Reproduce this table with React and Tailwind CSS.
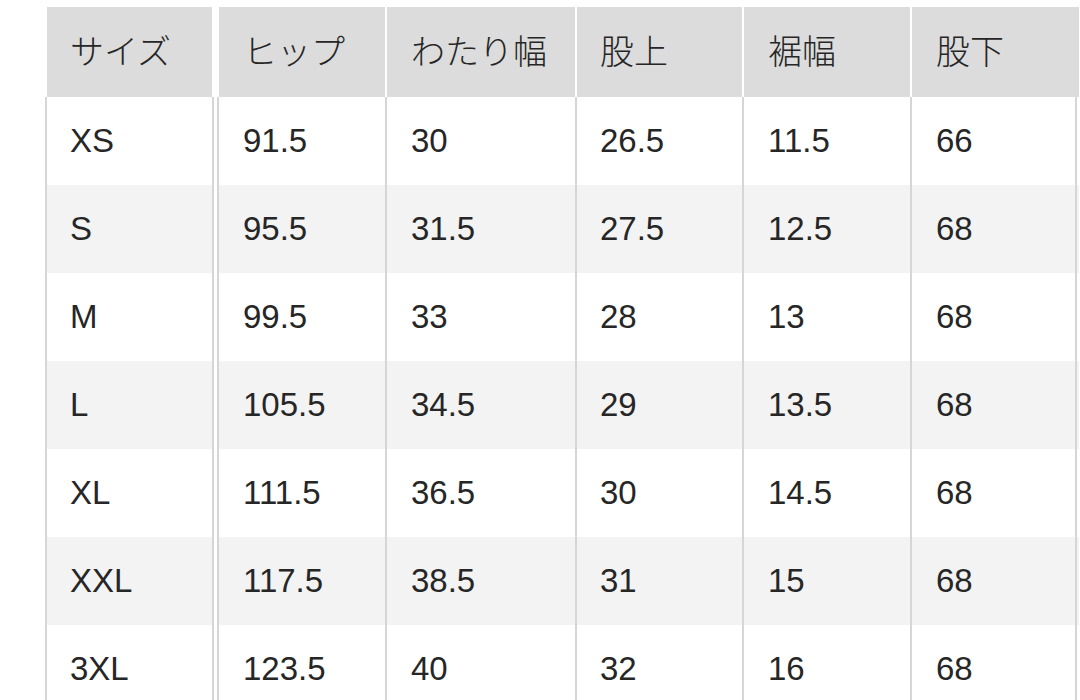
const columns = [
  { label: "サイズ", width: "w-[167px]", pad: "pl-[23px]" },
  { label: "ヒップ", width: "w-[168px]", pad: "pl-[24px]" },
  { label: "わたり幅", width: "w-[190px]", pad: "pl-[24px]" },
  { label: "股上", width: "w-[167px]", pad: "pl-[23px]" },
  { label: "裾幅", width: "w-[168px]", pad: "pl-[24px]" },
  { label: "股下", width: "w-[167px]", pad: "pl-[24px]" },
];

const rows = [
  ["XS", "91.5", "30", "26.5", "11.5", "66"],
  ["S", "95.5", "31.5", "27.5", "12.5", "68"],
  ["M", "99.5", "33", "28", "13", "68"],
  ["L", "105.5", "34.5", "29", "13.5", "68"],
  ["XL", "111.5", "36.5", "30", "14.5", "68"],
  ["XXL", "117.5", "38.5", "31", "15", "68"],
  ["3XL", "123.5", "40", "32", "16", "68"],
];

function Cell({ col, children, header, last }) {
  return (
    <div
      className={`${col.width} ${col.pad} flex shrink-0 items-center border-l-2 ${
        header ? "border-white bg-[#dcdcdc]" : "border-[#d6d6d6]"
      } ${last && !header ? "border-r-2" : ""}`}
    >
      {children}
    </div>
  );
}

function Spacer({ header }) {
  return (
    <div
      className={`w-[5px] shrink-0 border-l-2 bg-white ${
        header ? "border-white" : "border-[#d6d6d6]"
      }`}
    />
  );
}

export default function App() {
  return (
    <div
      className="h-[700px] w-[1080px] overflow-hidden bg-white pt-[7px] text-[33px] leading-none text-[#262626]"
      style={{ fontFamily: '"Liberation Sans", "Noto Sans CJK JP", sans-serif' }}
    >
      <div className="ml-[45px] flex h-[90px]">
        {columns.map((col, i) => (
          <div key={col.label} className="flex">
            <Cell col={col} header last={i === columns.length - 1}>
              <span className="text-[34px] font-light">{col.label}</span>
            </Cell>
            {i === 0 && <Spacer header />}
          </div>
        ))}
        <div className="w-[2px] shrink-0 bg-[#dcdcdc]" />
      </div>

      {rows.map((row, r) => (
        <div
          key={row[0]}
          className={`ml-[45px] flex h-[88px] w-[1034px] ${r % 2 === 1 ? "bg-[#f3f3f3]" : "bg-white"}`}
        >
          {row.map((value, i) => (
            <div key={i} className="flex">
              <Cell col={columns[i]} last={i === row.length - 1}>
                <span className="-mt-[2px]">{value}</span>
              </Cell>
              {i === 0 && <Spacer />}
            </div>
          ))}
        </div>
      ))}
    </div>
  );
}
